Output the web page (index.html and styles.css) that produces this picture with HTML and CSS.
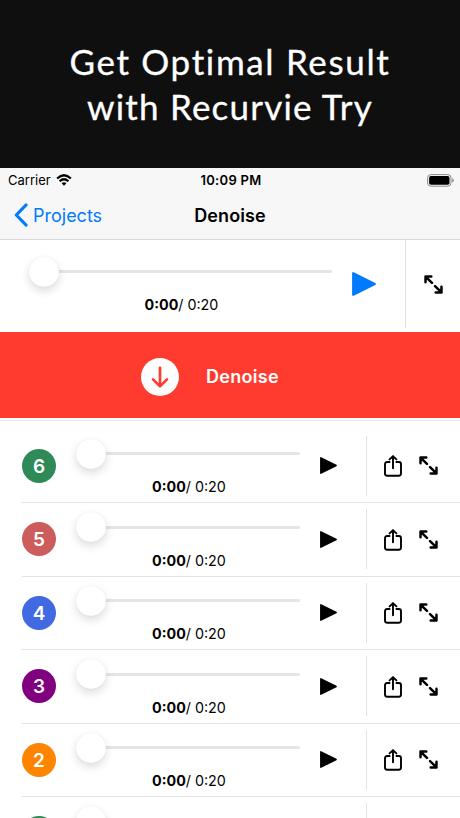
FILE: index.html
```
<!DOCTYPE html>
<html lang="en">
<head>
  <meta charset="UTF-8">
  <meta name="viewport" content="width=device-width, initial-scale=1.0">
  <title>Denoise</title>
  <link rel="stylesheet" href="styles.css">
</head>
<body>
  <svg class="symbols">
    <symbol id="play" viewBox="0 0 24 24">
      <path d="M1.2 1.2v21.6L22.8 12z" fill="currentColor" stroke="currentColor" stroke-width="2.2" stroke-linejoin="round"/>
    </symbol>
    <symbol id="expand" viewBox="0 0 20 20">
      <path d="M1.6 7.7V1.6h6.1M1.6 1.6l6.8 6.8M18.4 12.3v6.1h-6.1M18.4 18.4l-6.8-6.8" fill="none" stroke="currentColor" stroke-width="2.6" stroke-linecap="round" stroke-linejoin="round"/>
    </symbol>
    <symbol id="share" viewBox="0 0 18 22">
      <path d="M5.6 7H3.2Q1 7 1 9.2v9.4q0 2.2 2.2 2.2h11.6q2.2 0 2.2-2.2V9.2Q17 7 14.8 7h-2.4M9 13.3V1.4M5.6 4.4L9 1.1l3.4 3.3" fill="none" stroke="currentColor" stroke-width="1.9" stroke-linecap="round" stroke-linejoin="round"/>
    </symbol>
  </svg>

  <header class="promo">
    <h1><span class="line-one">Get Optimal Result</span><br><span class="line-two">with Recurvie Try</span></h1>
  </header>

  <div class="top">
    <div class="status">
      <div class="carrier">
        <span>Carrier</span>
        <svg class="wifi" viewBox="0 0 16 12">
          <path d="M1.1 4.5Q8-2 14.9 4.5M3.6 7.2q4.4-3.9 8.8 0" fill="none" stroke="#000" stroke-width="2.2"/>
          <path d="M5.6 9.2Q8 7.4 10.4 9.2L8 11.7z"/>
        </svg>
      </div>
      <span class="clock">10:09 PM</span>
      <svg class="battery" viewBox="0 0 27 13">
        <rect x="0.6" y="0.6" width="23.4" height="11.6" rx="3.2" fill="none" stroke="#8b8b8b"/>
        <rect x="2.1" y="2.1" width="20.4" height="8.6" rx="1.8"/>
        <path d="M25.2 4.3q1.6.6 1.6 2.1t-1.6 2.1z" fill="#8b8b8b"/>
      </svg>
    </div>
    <div class="nav">
      <a class="back" href="#">
        <svg viewBox="0 0 14 24"><path d="M12 2L2.3 12 12 22" fill="none" stroke="currentColor" stroke-width="3.2" stroke-linecap="round" stroke-linejoin="round"/></svg>
        <span>Projects</span>
      </a>
      <span class="title">Denoise</span>
    </div>
  </div>

  <div class="player">
    <div class="slider">
      <div class="track"><div class="thumb"></div></div>
      <div class="time"><b>0:00</b>/ 0:20</div>
    </div>
    <svg class="play"><use href="#play"/></svg>
    <div class="player-side"><svg class="expand"><use href="#expand"/></svg></div>
  </div>

  <div class="denoise">
    <svg viewBox="0 0 38 38">
      <circle cx="19" cy="19" r="19" fill="#fff"/>
      <path d="M19 9.8v18M12 21.4l7 7 7-7" fill="none" stroke="#ff3b30" stroke-width="2.7" stroke-linecap="round" stroke-linejoin="round"/>
    </svg>
    <span>Denoise</span>
  </div>

  <div class="list" id="list"></div>

  <script>
    const colors = ["seagreen", "indianred", "royalblue", "purple", "#ff8400", "seagreen"];
    const list = document.getElementById("list");

    colors.forEach(function (color, i) {
      list.innerHTML += `
        <div class="row">
          <div class="badge" style="background-color: ${color}">${6 - i}</div>
          <div class="slider">
            <div class="track"><div class="thumb"></div></div>
            <div class="time"><b>0:00</b>/ 0:20</div>
          </div>
          <svg class="play"><use href="#play"/></svg>
          <div class="actions">
            <svg class="share"><use href="#share"/></svg>
            <svg class="expand"><use href="#expand"/></svg>
          </div>
        </div>`;
    });
  </script>
</body>
</html>
```
FILE: styles.css
```
* {
  box-sizing: border-box;
}

body {
  font-family: Inter, "Liberation Sans", sans-serif;
  background-color: #fff;
  color: #000;
  margin: 0;
  height: 818px;
  overflow: hidden;
}

svg {
  display: block;
  flex-shrink: 0;
}

.symbols {
  display: none;
}

.promo {
  height: 168px;
  padding-top: 39px;
  background-color: #0f0f0f;
  color: #fff;
  text-align: center;
}

.promo h1 {
  margin: 0;
  font-family: Lato, sans-serif;
  font-size: 35px;
  font-weight: 400;
  line-height: 45px;
  -webkit-text-stroke: 0.3px #fff;
}

.line-one {
  letter-spacing: 1.65px;
}

.line-two {
  letter-spacing: 1.2px;
}

.top {
  height: 72px;
  background-color: #f7f7f7;
  border-bottom: 1px solid #d9d9d9;
}

.status {
  display: grid;
  grid-template-columns: 1fr auto 1fr;
  align-items: center;
  height: 24px;
  padding: 0 6px 0 8px;
  font-size: 13px;
}

.carrier {
  display: flex;
  align-items: center;
  gap: 5px;
}

.wifi {
  width: 16px;
  height: 12px;
}

.clock {
  font-weight: 600;
  letter-spacing: 0.3px;
}

.battery {
  width: 27px;
  height: 13px;
  justify-self: end;
}

.nav {
  display: grid;
  grid-template-columns: 1fr auto 1fr;
  align-items: center;
  height: 46px;
  padding: 0 14px;
  font-size: 18px;
}

.back {
  display: flex;
  align-items: center;
  gap: 5px;
  color: #007aff;
  text-decoration: none;
}

.back svg {
  width: 14px;
  height: 24px;
}

.title {
  font-weight: 600;
  letter-spacing: 0.1px;
}

.player {
  display: flex;
  align-items: center;
  height: 92px;
  padding-left: 31px;
}

.slider {
  display: flex;
  flex-direction: column;
}

.player .slider {
  width: 301px;
  gap: 23px;
  padding-top: 12px;
}

.track {
  display: flex;
  align-items: center;
  height: 3px;
  border-radius: 2px;
  background-color: #e5e5e5;
}

.thumb {
  width: 30px;
  height: 30px;
  flex-shrink: 0;
  margin-left: -2px;
  border-radius: 50%;
  background-color: #fff;
  box-shadow: 0 0 1px rgba(0, 0, 0, 0.1), 0 4px 10px rgba(0, 0, 0, 0.14);
}

.time {
  font-size: 14.3px;
  line-height: 18px;
  text-align: center;
}

.play {
  width: 17px;
  height: 17px;
}

.player .play {
  width: 24px;
  height: 24px;
  margin: 0 0 4px 20px;
  color: #007aff;
}

.player-side {
  display: flex;
  align-items: center;
  align-self: flex-start;
  height: 88px;
  margin-left: 29px;
  padding-left: 18px;
  border-left: 1px solid #e0e0e0;
}

.expand {
  width: 19px;
  height: 19px;
}

.denoise {
  display: flex;
  align-items: center;
  gap: 27px;
  height: 85.5px;
  padding: 4px 0 0 141px;
  background-color: #ff3b30;
  color: #fff;
  font-size: 18px;
  font-weight: 600;
  letter-spacing: 0.3px;
}

.denoise svg {
  width: 38px;
  height: 38px;
}

.list {
  margin-top: 2.5px;
  padding-top: 8.5px;
  border-top: 1px solid #e6e6e6;
}

.row {
  display: flex;
  align-items: center;
  height: 73.5px;
  margin-left: 22px;
  border-bottom: 1px solid #e3e3e3;
}

.badge {
  width: 34px;
  height: 34px;
  border-radius: 50%;
  color: #fff;
  font-size: 19px;
  font-weight: 600;
  line-height: 35px;
  text-align: center;
}

.row .slider {
  width: 222px;
  gap: 23px;
  margin-left: 22px;
  padding-top: 17px;
}

.row .play {
  margin-left: 20px;
}

.actions {
  display: flex;
  align-items: center;
  gap: 17px;
  height: 60px;
  margin-left: 29px;
  padding-left: 17px;
  border-left: 1px solid #e3e3e3;
}

.share {
  width: 18px;
  height: 22px;
  margin-top: 1px;
}
```
